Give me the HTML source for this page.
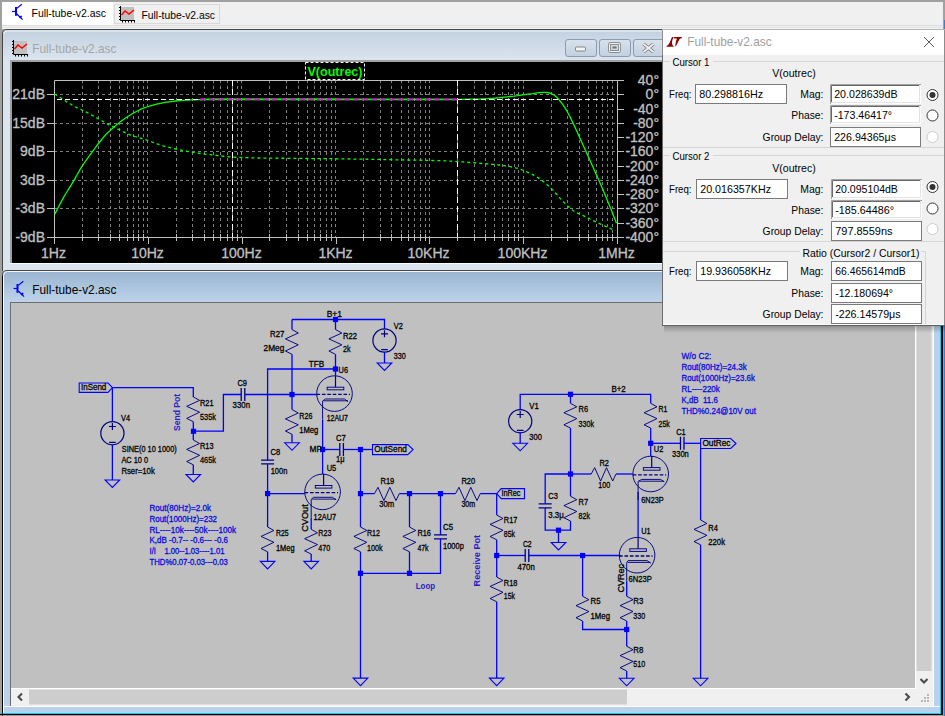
<!DOCTYPE html><html><head><meta charset="utf-8"><style>
html,body{margin:0;padding:0;width:945px;height:716px;overflow:hidden;background:#a0a0a0}
svg text{font-family:"Liberation Sans", sans-serif}
</style></head><body>
<svg width="945" height="716" viewBox="0 0 945 716" style="position:absolute;left:0;top:0;display:block">
<defs>
<linearGradient id="tbInact" x1="0" y1="0" x2="0" y2="1"><stop offset="0" stop-color="#c3d1df"/><stop offset="1" stop-color="#dbe5f0"/></linearGradient>
<linearGradient id="tbAct" x1="0" y1="0" x2="0" y2="1"><stop offset="0" stop-color="#9ab4d0"/><stop offset="1" stop-color="#bcd3ea"/></linearGradient>
<linearGradient id="btnG" x1="0" y1="0" x2="0" y2="1"><stop offset="0" stop-color="#d8e2ec"/><stop offset="1" stop-color="#c2d0de"/></linearGradient>
<linearGradient id="shadow" x1="0" y1="0" x2="0" y2="1"><stop offset="0" stop-color="#000" stop-opacity="0.25"/><stop offset="1" stop-color="#000" stop-opacity="0"/></linearGradient>
</defs>

<rect x="0" y="0" width="945" height="716" fill="#a0a0a0"/>
<rect x="2" y="2" width="943" height="27" fill="#f0f0f0"/>
<rect x="2" y="2" width="111" height="23" fill="#ffffff"/>
<rect x="2" y="25" width="943" height="1" fill="#dcdcdc"/>
<rect x="2" y="27" width="943" height="1" fill="#e2e2e2"/>
<rect x="114.5" y="4.5" width="105" height="19" fill="#f0f0f0" stroke="#d9d9d9" stroke-width="1"/>
<g fill="none" stroke="#0000ff"><line x1="12" y1="11.5" x2="15.5" y2="11.5" stroke-width="1.2"/><line x1="16" y1="7" x2="16" y2="15.8" stroke-width="2"/><line x1="16.8" y1="8.4" x2="21.8" y2="4.2" stroke-width="1.2"/><line x1="16.8" y1="14" x2="22.6" y2="19.6" stroke-width="1.2"/><line x1="19.4" y1="17.6" x2="21.8" y2="16.2" stroke-width="1.8"/></g>
<rect x="121" y="7" width="13" height="13" fill="#c0c0c0"/><path d="M120.5 6 V20.5 H135" fill="none" stroke="#000" stroke-width="1"/><rect x="119" y="7" width="2" height="1" fill="#000"/><rect x="122" y="21" width="1" height="1.5" fill="#000"/><rect x="119" y="10" width="2" height="1" fill="#000"/><rect x="125" y="21" width="1" height="1.5" fill="#000"/><rect x="119" y="13" width="2" height="1" fill="#000"/><rect x="128" y="21" width="1" height="1.5" fill="#000"/><rect x="119" y="16" width="2" height="1" fill="#000"/><rect x="131" y="21" width="1" height="1.5" fill="#000"/><rect x="119" y="19" width="2" height="1" fill="#000"/><rect x="134" y="21" width="1" height="1.5" fill="#000"/><path d="M121.5 15 L125 11 L129 14 L134 10" fill="none" stroke="#ff0000" stroke-width="1.5"/>
<text x="31.5" y="17" font-size="11.5" fill="#000" textLength="74.5" lengthAdjust="spacingAndGlyphs">Full-tube-v2.asc</text>
<text x="141.5" y="18.6" font-size="11.3" fill="#000" textLength="73.5" lengthAdjust="spacingAndGlyphs">Full-tube-v2.asc</text>
<rect x="2" y="26" width="943" height="1" fill="#f0f0f0"/>
<rect x="2" y="28" width="943" height="1" fill="#f4f4f4"/>
<path d="M2.5 271 V34 Q2.5 29.5 7 29.5 H945" fill="#dbe5f0" stroke="#444" stroke-width="1"/>
<path d="M3 61 V34.5 Q3 30 7.5 30 H945 V61 Z" fill="url(#tbInact)"/>
<path d="M4 33.5 Q4 31 7.5 31 H945" fill="none" stroke="#eef3f8" stroke-width="1"/>
<rect x="3" y="61" width="942" height="210" fill="#dbe5f0"/>
<rect x="14" y="41" width="13" height="13" fill="#c0c0c0"/><path d="M13.5 40 V54.5 H28" fill="none" stroke="#000" stroke-width="1"/><rect x="12" y="41" width="2" height="1" fill="#000"/><rect x="15" y="55" width="1" height="1.5" fill="#000"/><rect x="12" y="44" width="2" height="1" fill="#000"/><rect x="18" y="55" width="1" height="1.5" fill="#000"/><rect x="12" y="47" width="2" height="1" fill="#000"/><rect x="21" y="55" width="1" height="1.5" fill="#000"/><rect x="12" y="50" width="2" height="1" fill="#000"/><rect x="24" y="55" width="1" height="1.5" fill="#000"/><rect x="12" y="53" width="2" height="1" fill="#000"/><rect x="27" y="55" width="1" height="1.5" fill="#000"/><path d="M14.5 49 L18 45 L22 48 L27 44" fill="none" stroke="#ff0000" stroke-width="1.5"/>
<text x="32.3" y="53" font-size="12.2" fill="#a5a5a5" textLength="84" lengthAdjust="spacingAndGlyphs">Full-tube-v2.asc</text>
<rect x="565.5" y="39.5" width="31" height="17" rx="2.5" fill="url(#btnG)" stroke="#8c9bb0" stroke-width="1"/>
<rect x="575.5" y="47" width="10" height="4" rx="1" fill="#f4f4f4" stroke="#707070" stroke-width="0.8"/>
<rect x="599.5" y="39.5" width="31" height="17" rx="2.5" fill="url(#btnG)" stroke="#8c9bb0" stroke-width="1"/>
<rect x="609.5" y="43.5" width="10" height="8" rx="1" fill="none" stroke="#707070" stroke-width="2.6"/>
<rect x="609.5" y="43.5" width="10" height="8" rx="1" fill="none" stroke="#f4f4f4" stroke-width="1.2"/>
<rect x="612.5" y="46.5" width="4" height="2" fill="#707070"/>
<rect x="633.5" y="39.5" width="31" height="17" rx="2.5" fill="url(#btnG)" stroke="#8c9bb0" stroke-width="1"/>
<path d="M643.5 44 L653.5 52 M653.5 44 L643.5 52" stroke="#707070" stroke-width="3.4"/>
<path d="M643.5 44 L653.5 52 M653.5 44 L643.5 52" stroke="#f4f4f4" stroke-width="1.8"/>
<rect x="10" y="60" width="935" height="204" fill="#ffffff"/>
<rect x="10" y="60" width="935" height="203" fill="#a0a0a0"/>
<rect x="12" y="62" width="933" height="201" fill="#000000"/>
<line x1="54" y1="94.5" x2="617" y2="94.5" stroke="#808080" stroke-width="1" stroke-dasharray="3 3"/>
<line x1="54" y1="123.5" x2="617" y2="123.5" stroke="#808080" stroke-width="1" stroke-dasharray="3 3"/>
<line x1="54" y1="151.5" x2="617" y2="151.5" stroke="#808080" stroke-width="1" stroke-dasharray="3 3"/>
<line x1="54" y1="180.5" x2="617" y2="180.5" stroke="#808080" stroke-width="1" stroke-dasharray="3 3"/>
<line x1="54" y1="208.5" x2="617" y2="208.5" stroke="#808080" stroke-width="1" stroke-dasharray="3 3"/>
<line x1="82.5" y1="80" x2="82.5" y2="237" stroke="#808080" stroke-width="1" stroke-dasharray="3 3"/>
<line x1="98.5" y1="80" x2="98.5" y2="237" stroke="#808080" stroke-width="1" stroke-dasharray="3 3"/>
<line x1="110.5" y1="80" x2="110.5" y2="237" stroke="#808080" stroke-width="1" stroke-dasharray="3 3"/>
<line x1="119.5" y1="80" x2="119.5" y2="237" stroke="#808080" stroke-width="1" stroke-dasharray="3 3"/>
<line x1="127.5" y1="80" x2="127.5" y2="237" stroke="#808080" stroke-width="1" stroke-dasharray="3 3"/>
<line x1="133.5" y1="80" x2="133.5" y2="237" stroke="#808080" stroke-width="1" stroke-dasharray="3 3"/>
<line x1="138.5" y1="80" x2="138.5" y2="237" stroke="#808080" stroke-width="1" stroke-dasharray="3 3"/>
<line x1="143.5" y1="80" x2="143.5" y2="237" stroke="#808080" stroke-width="1" stroke-dasharray="3 3"/>
<line x1="147.5" y1="80" x2="147.5" y2="237" stroke="#808080" stroke-width="1" stroke-dasharray="3 3"/>
<line x1="176.5" y1="80" x2="176.5" y2="237" stroke="#808080" stroke-width="1" stroke-dasharray="3 3"/>
<line x1="192.5" y1="80" x2="192.5" y2="237" stroke="#808080" stroke-width="1" stroke-dasharray="3 3"/>
<line x1="204.5" y1="80" x2="204.5" y2="237" stroke="#808080" stroke-width="1" stroke-dasharray="3 3"/>
<line x1="213.5" y1="80" x2="213.5" y2="237" stroke="#808080" stroke-width="1" stroke-dasharray="3 3"/>
<line x1="220.5" y1="80" x2="220.5" y2="237" stroke="#808080" stroke-width="1" stroke-dasharray="3 3"/>
<line x1="227.5" y1="80" x2="227.5" y2="237" stroke="#808080" stroke-width="1" stroke-dasharray="3 3"/>
<line x1="232.5" y1="80" x2="232.5" y2="237" stroke="#808080" stroke-width="1" stroke-dasharray="3 3"/>
<line x1="237.5" y1="80" x2="237.5" y2="237" stroke="#808080" stroke-width="1" stroke-dasharray="3 3"/>
<line x1="241.5" y1="80" x2="241.5" y2="237" stroke="#808080" stroke-width="1" stroke-dasharray="3 3"/>
<line x1="269.5" y1="80" x2="269.5" y2="237" stroke="#808080" stroke-width="1" stroke-dasharray="3 3"/>
<line x1="286.5" y1="80" x2="286.5" y2="237" stroke="#808080" stroke-width="1" stroke-dasharray="3 3"/>
<line x1="298.5" y1="80" x2="298.5" y2="237" stroke="#808080" stroke-width="1" stroke-dasharray="3 3"/>
<line x1="307.5" y1="80" x2="307.5" y2="237" stroke="#808080" stroke-width="1" stroke-dasharray="3 3"/>
<line x1="314.5" y1="80" x2="314.5" y2="237" stroke="#808080" stroke-width="1" stroke-dasharray="3 3"/>
<line x1="320.5" y1="80" x2="320.5" y2="237" stroke="#808080" stroke-width="1" stroke-dasharray="3 3"/>
<line x1="326.5" y1="80" x2="326.5" y2="237" stroke="#808080" stroke-width="1" stroke-dasharray="3 3"/>
<line x1="331.5" y1="80" x2="331.5" y2="237" stroke="#808080" stroke-width="1" stroke-dasharray="3 3"/>
<line x1="335.5" y1="80" x2="335.5" y2="237" stroke="#808080" stroke-width="1" stroke-dasharray="3 3"/>
<line x1="363.5" y1="80" x2="363.5" y2="237" stroke="#808080" stroke-width="1" stroke-dasharray="3 3"/>
<line x1="380.5" y1="80" x2="380.5" y2="237" stroke="#808080" stroke-width="1" stroke-dasharray="3 3"/>
<line x1="391.5" y1="80" x2="391.5" y2="237" stroke="#808080" stroke-width="1" stroke-dasharray="3 3"/>
<line x1="401.5" y1="80" x2="401.5" y2="237" stroke="#808080" stroke-width="1" stroke-dasharray="3 3"/>
<line x1="408.5" y1="80" x2="408.5" y2="237" stroke="#808080" stroke-width="1" stroke-dasharray="3 3"/>
<line x1="414.5" y1="80" x2="414.5" y2="237" stroke="#808080" stroke-width="1" stroke-dasharray="3 3"/>
<line x1="420.5" y1="80" x2="420.5" y2="237" stroke="#808080" stroke-width="1" stroke-dasharray="3 3"/>
<line x1="425.5" y1="80" x2="425.5" y2="237" stroke="#808080" stroke-width="1" stroke-dasharray="3 3"/>
<line x1="429.5" y1="80" x2="429.5" y2="237" stroke="#808080" stroke-width="1" stroke-dasharray="3 3"/>
<line x1="457.5" y1="80" x2="457.5" y2="237" stroke="#808080" stroke-width="1" stroke-dasharray="3 3"/>
<line x1="474.5" y1="80" x2="474.5" y2="237" stroke="#808080" stroke-width="1" stroke-dasharray="3 3"/>
<line x1="485.5" y1="80" x2="485.5" y2="237" stroke="#808080" stroke-width="1" stroke-dasharray="3 3"/>
<line x1="494.5" y1="80" x2="494.5" y2="237" stroke="#808080" stroke-width="1" stroke-dasharray="3 3"/>
<line x1="502.5" y1="80" x2="502.5" y2="237" stroke="#808080" stroke-width="1" stroke-dasharray="3 3"/>
<line x1="508.5" y1="80" x2="508.5" y2="237" stroke="#808080" stroke-width="1" stroke-dasharray="3 3"/>
<line x1="514.5" y1="80" x2="514.5" y2="237" stroke="#808080" stroke-width="1" stroke-dasharray="3 3"/>
<line x1="518.5" y1="80" x2="518.5" y2="237" stroke="#808080" stroke-width="1" stroke-dasharray="3 3"/>
<line x1="523.5" y1="80" x2="523.5" y2="237" stroke="#808080" stroke-width="1" stroke-dasharray="3 3"/>
<line x1="551.5" y1="80" x2="551.5" y2="237" stroke="#808080" stroke-width="1" stroke-dasharray="3 3"/>
<line x1="567.5" y1="80" x2="567.5" y2="237" stroke="#808080" stroke-width="1" stroke-dasharray="3 3"/>
<line x1="579.5" y1="80" x2="579.5" y2="237" stroke="#808080" stroke-width="1" stroke-dasharray="3 3"/>
<line x1="588.5" y1="80" x2="588.5" y2="237" stroke="#808080" stroke-width="1" stroke-dasharray="3 3"/>
<line x1="596.5" y1="80" x2="596.5" y2="237" stroke="#808080" stroke-width="1" stroke-dasharray="3 3"/>
<line x1="602.5" y1="80" x2="602.5" y2="237" stroke="#808080" stroke-width="1" stroke-dasharray="3 3"/>
<line x1="607.5" y1="80" x2="607.5" y2="237" stroke="#808080" stroke-width="1" stroke-dasharray="3 3"/>
<line x1="612.5" y1="80" x2="612.5" y2="237" stroke="#808080" stroke-width="1" stroke-dasharray="3 3"/>
<path d="M54.5 237.5 V80.5 H617.5 V237.5 Z" fill="none" stroke="#c0c0c0" stroke-width="1"/>
<line x1="617" y1="80.5" x2="624" y2="80.5" stroke="#c0c0c0"/>
<line x1="617" y1="237.5" x2="624" y2="237.5" stroke="#c0c0c0"/>
<line x1="47" y1="94.5" x2="54" y2="94.5" stroke="#c0c0c0"/>
<text x="45" y="99.3" font-size="14" fill="#c0c0c0" stroke="#c0c0c0" stroke-width="0.3" text-anchor="end">21dB</text>
<line x1="47" y1="123.5" x2="54" y2="123.5" stroke="#c0c0c0"/>
<text x="45" y="128.3" font-size="14" fill="#c0c0c0" stroke="#c0c0c0" stroke-width="0.3" text-anchor="end">15dB</text>
<line x1="47" y1="151.5" x2="54" y2="151.5" stroke="#c0c0c0"/>
<text x="45" y="156.3" font-size="14" fill="#c0c0c0" stroke="#c0c0c0" stroke-width="0.3" text-anchor="end">9dB</text>
<line x1="47" y1="180.5" x2="54" y2="180.5" stroke="#c0c0c0"/>
<text x="45" y="185.3" font-size="14" fill="#c0c0c0" stroke="#c0c0c0" stroke-width="0.3" text-anchor="end">3dB</text>
<line x1="47" y1="208.5" x2="54" y2="208.5" stroke="#c0c0c0"/>
<text x="45" y="213.3" font-size="14" fill="#c0c0c0" stroke="#c0c0c0" stroke-width="0.3" text-anchor="end">-3dB</text>
<line x1="47" y1="237.5" x2="54" y2="237.5" stroke="#c0c0c0"/>
<text x="45" y="242.3" font-size="14" fill="#c0c0c0" stroke="#c0c0c0" stroke-width="0.3" text-anchor="end">-9dB</text>
<line x1="617" y1="80.5" x2="624" y2="80.5" stroke="#c0c0c0"/>
<text x="659" y="85.3" font-size="14" fill="#c0c0c0" stroke="#c0c0c0" stroke-width="0.3" text-anchor="end">40°</text>
<line x1="617" y1="94.5" x2="624" y2="94.5" stroke="#c0c0c0"/>
<text x="659" y="99.3" font-size="14" fill="#c0c0c0" stroke="#c0c0c0" stroke-width="0.3" text-anchor="end">0°</text>
<line x1="617" y1="109.5" x2="624" y2="109.5" stroke="#c0c0c0"/>
<text x="659" y="114.3" font-size="14" fill="#c0c0c0" stroke="#c0c0c0" stroke-width="0.3" text-anchor="end">-40°</text>
<line x1="617" y1="123.5" x2="624" y2="123.5" stroke="#c0c0c0"/>
<text x="659" y="128.3" font-size="14" fill="#c0c0c0" stroke="#c0c0c0" stroke-width="0.3" text-anchor="end">-80°</text>
<line x1="617" y1="137.5" x2="624" y2="137.5" stroke="#c0c0c0"/>
<text x="659" y="142.3" font-size="14" fill="#c0c0c0" stroke="#c0c0c0" stroke-width="0.3" text-anchor="end">-120°</text>
<line x1="617" y1="151.5" x2="624" y2="151.5" stroke="#c0c0c0"/>
<text x="659" y="156.3" font-size="14" fill="#c0c0c0" stroke="#c0c0c0" stroke-width="0.3" text-anchor="end">-160°</text>
<line x1="617" y1="166.5" x2="624" y2="166.5" stroke="#c0c0c0"/>
<text x="659" y="171.3" font-size="14" fill="#c0c0c0" stroke="#c0c0c0" stroke-width="0.3" text-anchor="end">-200°</text>
<line x1="617" y1="180.5" x2="624" y2="180.5" stroke="#c0c0c0"/>
<text x="659" y="185.3" font-size="14" fill="#c0c0c0" stroke="#c0c0c0" stroke-width="0.3" text-anchor="end">-240°</text>
<line x1="617" y1="194.5" x2="624" y2="194.5" stroke="#c0c0c0"/>
<text x="659" y="199.3" font-size="14" fill="#c0c0c0" stroke="#c0c0c0" stroke-width="0.3" text-anchor="end">-280°</text>
<line x1="617" y1="208.5" x2="624" y2="208.5" stroke="#c0c0c0"/>
<text x="659" y="213.3" font-size="14" fill="#c0c0c0" stroke="#c0c0c0" stroke-width="0.3" text-anchor="end">-320°</text>
<line x1="617" y1="223.5" x2="624" y2="223.5" stroke="#c0c0c0"/>
<text x="659" y="228.3" font-size="14" fill="#c0c0c0" stroke="#c0c0c0" stroke-width="0.3" text-anchor="end">-360°</text>
<line x1="617" y1="237.5" x2="624" y2="237.5" stroke="#c0c0c0"/>
<text x="659" y="242.3" font-size="14" fill="#c0c0c0" stroke="#c0c0c0" stroke-width="0.3" text-anchor="end">-400°</text>
<line x1="54.5" y1="237" x2="54.5" y2="244" stroke="#c0c0c0"/>
<text x="53.5" y="257.8" font-size="14" fill="#c0c0c0" stroke="#c0c0c0" stroke-width="0.3" text-anchor="middle">1Hz</text>
<line x1="82.5" y1="234" x2="82.5" y2="241" stroke="#c0c0c0"/>
<line x1="98.5" y1="234" x2="98.5" y2="241" stroke="#c0c0c0"/>
<line x1="110.5" y1="234" x2="110.5" y2="241" stroke="#c0c0c0"/>
<line x1="119.5" y1="234" x2="119.5" y2="241" stroke="#c0c0c0"/>
<line x1="127.5" y1="234" x2="127.5" y2="241" stroke="#c0c0c0"/>
<line x1="133.5" y1="234" x2="133.5" y2="241" stroke="#c0c0c0"/>
<line x1="138.5" y1="234" x2="138.5" y2="241" stroke="#c0c0c0"/>
<line x1="143.5" y1="234" x2="143.5" y2="241" stroke="#c0c0c0"/>
<line x1="148.5" y1="237" x2="148.5" y2="244" stroke="#c0c0c0"/>
<text x="147.5" y="257.8" font-size="14" fill="#c0c0c0" stroke="#c0c0c0" stroke-width="0.3" text-anchor="middle">10Hz</text>
<line x1="176.5" y1="234" x2="176.5" y2="241" stroke="#c0c0c0"/>
<line x1="192.5" y1="234" x2="192.5" y2="241" stroke="#c0c0c0"/>
<line x1="204.5" y1="234" x2="204.5" y2="241" stroke="#c0c0c0"/>
<line x1="213.5" y1="234" x2="213.5" y2="241" stroke="#c0c0c0"/>
<line x1="220.5" y1="234" x2="220.5" y2="241" stroke="#c0c0c0"/>
<line x1="227.5" y1="234" x2="227.5" y2="241" stroke="#c0c0c0"/>
<line x1="232.5" y1="234" x2="232.5" y2="241" stroke="#c0c0c0"/>
<line x1="237.5" y1="234" x2="237.5" y2="241" stroke="#c0c0c0"/>
<line x1="242.5" y1="237" x2="242.5" y2="244" stroke="#c0c0c0"/>
<text x="241.5" y="257.8" font-size="14" fill="#c0c0c0" stroke="#c0c0c0" stroke-width="0.3" text-anchor="middle">100Hz</text>
<line x1="269.5" y1="234" x2="269.5" y2="241" stroke="#c0c0c0"/>
<line x1="286.5" y1="234" x2="286.5" y2="241" stroke="#c0c0c0"/>
<line x1="298.5" y1="234" x2="298.5" y2="241" stroke="#c0c0c0"/>
<line x1="307.5" y1="234" x2="307.5" y2="241" stroke="#c0c0c0"/>
<line x1="314.5" y1="234" x2="314.5" y2="241" stroke="#c0c0c0"/>
<line x1="320.5" y1="234" x2="320.5" y2="241" stroke="#c0c0c0"/>
<line x1="326.5" y1="234" x2="326.5" y2="241" stroke="#c0c0c0"/>
<line x1="331.5" y1="234" x2="331.5" y2="241" stroke="#c0c0c0"/>
<line x1="336.5" y1="237" x2="336.5" y2="244" stroke="#c0c0c0"/>
<text x="335.5" y="257.8" font-size="14" fill="#c0c0c0" stroke="#c0c0c0" stroke-width="0.3" text-anchor="middle">1KHz</text>
<line x1="363.5" y1="234" x2="363.5" y2="241" stroke="#c0c0c0"/>
<line x1="380.5" y1="234" x2="380.5" y2="241" stroke="#c0c0c0"/>
<line x1="391.5" y1="234" x2="391.5" y2="241" stroke="#c0c0c0"/>
<line x1="401.5" y1="234" x2="401.5" y2="241" stroke="#c0c0c0"/>
<line x1="408.5" y1="234" x2="408.5" y2="241" stroke="#c0c0c0"/>
<line x1="414.5" y1="234" x2="414.5" y2="241" stroke="#c0c0c0"/>
<line x1="420.5" y1="234" x2="420.5" y2="241" stroke="#c0c0c0"/>
<line x1="425.5" y1="234" x2="425.5" y2="241" stroke="#c0c0c0"/>
<line x1="429.5" y1="237" x2="429.5" y2="244" stroke="#c0c0c0"/>
<text x="428.5" y="257.8" font-size="14" fill="#c0c0c0" stroke="#c0c0c0" stroke-width="0.3" text-anchor="middle">10KHz</text>
<line x1="457.5" y1="234" x2="457.5" y2="241" stroke="#c0c0c0"/>
<line x1="474.5" y1="234" x2="474.5" y2="241" stroke="#c0c0c0"/>
<line x1="485.5" y1="234" x2="485.5" y2="241" stroke="#c0c0c0"/>
<line x1="494.5" y1="234" x2="494.5" y2="241" stroke="#c0c0c0"/>
<line x1="502.5" y1="234" x2="502.5" y2="241" stroke="#c0c0c0"/>
<line x1="508.5" y1="234" x2="508.5" y2="241" stroke="#c0c0c0"/>
<line x1="514.5" y1="234" x2="514.5" y2="241" stroke="#c0c0c0"/>
<line x1="518.5" y1="234" x2="518.5" y2="241" stroke="#c0c0c0"/>
<line x1="523.5" y1="237" x2="523.5" y2="244" stroke="#c0c0c0"/>
<text x="522.5" y="257.8" font-size="14" fill="#c0c0c0" stroke="#c0c0c0" stroke-width="0.3" text-anchor="middle">100KHz</text>
<line x1="551.5" y1="234" x2="551.5" y2="241" stroke="#c0c0c0"/>
<line x1="567.5" y1="234" x2="567.5" y2="241" stroke="#c0c0c0"/>
<line x1="579.5" y1="234" x2="579.5" y2="241" stroke="#c0c0c0"/>
<line x1="588.5" y1="234" x2="588.5" y2="241" stroke="#c0c0c0"/>
<line x1="596.5" y1="234" x2="596.5" y2="241" stroke="#c0c0c0"/>
<line x1="602.5" y1="234" x2="602.5" y2="241" stroke="#c0c0c0"/>
<line x1="607.5" y1="234" x2="607.5" y2="241" stroke="#c0c0c0"/>
<line x1="612.5" y1="234" x2="612.5" y2="241" stroke="#c0c0c0"/>
<line x1="617.5" y1="237" x2="617.5" y2="244" stroke="#c0c0c0"/>
<text x="616.5" y="257.8" font-size="14" fill="#c0c0c0" stroke="#c0c0c0" stroke-width="0.3" text-anchor="middle">1MHz</text>
<line x1="232.5" y1="80" x2="232.5" y2="237" stroke="#ffffff" stroke-width="1" stroke-dasharray="6 3"/>
<line x1="457.5" y1="80" x2="457.5" y2="237" stroke="#ffffff" stroke-width="1" stroke-dasharray="6 3"/>
<polyline points="54.6,94.0 56.7,95.3 59.6,97.2 63.0,99.4 66.6,101.7 70.0,103.8 72.9,105.5 75.2,106.8 77.2,107.8 79.1,108.7 80.8,109.5 82.6,110.3 84.4,111.2 86.3,112.2 88.2,113.2 90.1,114.3 92.0,115.3 93.9,116.3 95.8,117.4 97.7,118.5 99.6,119.5 101.5,120.6 103.5,121.7 105.4,122.8 107.3,123.8 109.2,124.8 111.1,125.8 113.0,126.7 114.9,127.7 116.8,128.6 118.7,129.5 120.6,130.4 122.4,131.3 124.2,132.2 126.0,133.1 128.0,133.9 130.2,134.8 132.6,135.6 135.1,136.5 137.8,137.3 140.5,138.1 143.3,139.0 146.2,139.9 149.1,140.9 152.0,142.0 154.9,143.1 158.0,144.2 161.2,145.3 164.5,146.3 168.1,147.2 171.8,148.1 175.7,149.0 179.7,149.8 183.6,150.6 187.5,151.3 191.2,152.0 194.6,152.6 198.1,153.1 201.8,153.7 205.8,154.2 210.4,154.7 215.1,155.2 219.5,155.8 224.3,156.3 230.1,156.9 237.5,157.3 247.0,157.7 259.2,158.0 273.8,158.2 290.0,158.3 307.0,158.5 323.9,158.6 340.0,158.8 356.2,159.1 373.3,159.3 390.4,159.7 406.5,160.0 420.8,160.2 432.3,160.5 440.3,160.7 445.5,160.9 448.8,161.0 451.2,161.2 453.8,161.4 457.5,161.6 462.4,161.9 467.7,162.3 473.1,162.7 478.4,163.2 483.2,163.6 487.3,163.9 490.5,164.2 493.1,164.4 495.3,164.6 497.2,164.8 499.0,165.0 501.0,165.2 503.1,165.5 505.1,165.8 507.1,166.1 509.1,166.4 510.9,166.8 512.6,167.1 514.1,167.4 515.5,167.8 516.8,168.1 518.1,168.4 519.4,168.9 520.9,169.4 522.5,170.0 524.2,170.7 526.0,171.5 527.8,172.3 529.6,173.1 531.4,174.0 533.1,174.9 534.9,175.9 536.6,176.8 538.4,177.9 540.1,179.1 541.9,180.3 543.7,181.7 545.4,183.1 547.2,184.7 548.9,186.3 550.7,188.0 552.4,189.7 554.1,191.5 555.9,193.5 557.6,195.4 559.3,197.4 561.1,199.4 562.8,201.2 564.5,202.9 566.3,204.7 568.0,206.3 569.8,207.9 571.5,209.4 573.3,210.7 575.1,211.8 576.8,212.8 578.6,213.6 580.3,214.3 582.1,215.1 583.8,215.9 585.5,216.8 587.3,217.6 589.0,218.5 590.7,219.4 592.5,220.3 594.2,221.1 595.9,221.9 597.7,222.8 599.4,223.6 601.2,224.4 602.9,225.2 604.7,226.0 606.6,226.8 608.6,227.7 610.6,228.6 612.5,229.4 614.1,230.1 615.2,230.6" fill="none" stroke="#00ff00" stroke-width="1.3" stroke-dasharray="3 3"/>
<polyline points="54.6,214.5 55.6,212.6 57.0,209.9 58.6,206.7 60.3,203.4 62.1,200.1 63.7,197.1 65.2,194.5 66.8,192.0 68.3,189.6 69.8,187.2 71.4,184.7 72.9,182.2 74.4,179.6 75.9,176.9 77.4,174.3 78.9,171.6 80.4,168.9 82.1,166.2 83.9,163.5 85.7,160.8 87.7,158.1 89.6,155.4 91.6,152.8 93.5,150.2 95.4,147.6 97.3,145.0 99.2,142.5 101.2,140.0 103.1,137.7 105.0,135.5 106.9,133.5 108.8,131.6 110.7,129.9 112.6,128.2 114.5,126.6 116.4,125.0 118.3,123.5 120.1,122.0 122.0,120.6 123.9,119.2 125.9,117.8 127.9,116.5 130.0,115.2 132.2,113.8 134.5,112.5 136.8,111.2 139.2,110.0 141.6,108.9 144.1,107.9 146.7,107.0 149.4,106.1 152.1,105.3 154.9,104.6 157.7,103.9 160.6,103.3 163.5,102.7 166.4,102.2 169.5,101.8 172.7,101.4 176.0,101.0 179.5,100.7 183.0,100.4 186.7,100.1 190.5,99.9 194.6,99.8 198.9,99.6 201.7,99.5 202.4,99.4 203.4,99.3 206.8,99.3 214.9,99.2 230.0,99.2 255.5,99.2 290.3,99.2 329.8,99.2 369.3,99.3 404.3,99.3 430.0,99.3 445.4,99.3 454.2,99.3 458.3,99.3 459.9,99.3 461.2,99.3 464.4,99.3 469.0,99.2 473.3,99.2 477.2,99.1 480.8,99.0 484.2,98.8 487.3,98.7 490.0,98.5 492.4,98.4 494.4,98.2 496.3,98.0 498.1,97.8 500.0,97.6 501.9,97.4 503.7,97.2 505.4,97.1 507.1,96.9 508.8,96.7 510.5,96.5 512.2,96.3 514.0,96.1 515.7,95.8 517.4,95.6 519.2,95.3 520.9,95.1 522.7,94.9 524.5,94.7 526.3,94.4 528.1,94.2 529.8,94.0 531.4,93.8 532.9,93.6 534.4,93.3 535.7,93.1 537.1,92.9 538.4,92.7 539.8,92.6 541.2,92.5 542.7,92.4 544.1,92.4 545.6,92.4 546.9,92.5 548.2,92.7 549.4,93.0 550.5,93.3 551.5,93.7 552.5,94.2 553.5,94.8 554.5,95.5 555.5,96.3 556.6,97.2 557.6,98.2 558.6,99.3 559.7,100.5 560.7,101.8 561.7,103.2 562.8,104.6 563.8,106.1 564.9,107.7 565.9,109.4 567.0,111.2 568.0,113.0 568.9,114.7 569.9,116.6 570.9,118.6 572.0,121.0 573.3,123.7 574.8,126.9 576.5,130.6 578.3,134.6 580.2,138.7 582.0,142.8 583.8,146.8 585.5,150.6 587.3,154.4 589.0,158.2 590.7,162.1 592.5,165.9 594.2,169.8 595.9,173.7 597.6,177.6 599.4,181.5 601.1,185.4 602.9,189.6 604.7,193.9 606.7,198.8 609.0,204.4 611.3,210.1 613.4,215.4 615.2,220.0 616.5,223.2" fill="none" stroke="#00ff00" stroke-width="1.3"/>
<line x1="57" y1="99.5" x2="617" y2="99.5" stroke="#ffffff" stroke-width="1.1" stroke-dasharray="5 3"/>
<line x1="200" y1="99.5" x2="457.5" y2="99.5" stroke="#00ff00" stroke-width="1.4"/>
<line x1="200" y1="99.5" x2="457.5" y2="99.5" stroke="#ff00ff" stroke-width="1.4" stroke-dasharray="6 3"/>
<rect x="305.5" y="62.5" width="59" height="17" fill="#000" stroke="#ffffff" stroke-width="1" stroke-dasharray="3 2"/>
<text x="307.5" y="75.5" font-size="13.6" font-weight="bold" fill="#00ff00" textLength="55" lengthAdjust="spacingAndGlyphs">V(outrec)</text>
<path d="M2.5 716 V275 Q2.5 270.5 7 270.5 H945" fill="#b9d1ea" stroke="#444" stroke-width="1"/>
<path d="M3 302 V275.5 Q3 271 7.5 271 H945 V302 Z" fill="url(#tbAct)"/>
<path d="M3.5 275.5 Q3.5 271.5 7.5 271.5 H945" fill="none" stroke="#f2f6fa" stroke-width="1"/>
<rect x="3" y="302" width="937" height="411" fill="#b9d1ea"/>
<g fill="none" stroke="#0000ff"><line x1="13.5" y1="288.5" x2="17.0" y2="288.5" stroke-width="1.2"/><line x1="17.5" y1="284" x2="17.5" y2="292.8" stroke-width="2"/><line x1="18.3" y1="285.4" x2="23.3" y2="281.2" stroke-width="1.2"/><line x1="18.3" y1="291" x2="24.1" y2="296.6" stroke-width="1.2"/><line x1="20.9" y1="294.6" x2="23.3" y2="293.2" stroke-width="1.8"/></g>
<text x="32.3" y="294" font-size="12.2" fill="#000" textLength="84" lengthAdjust="spacingAndGlyphs">Full-tube-v2.asc</text>
<rect x="10" y="302" width="924" height="405" fill="#ffffff"/>
<rect x="10" y="302" width="923" height="404" fill="#6d6d6d"/>
<rect x="11" y="303" width="922" height="403" fill="#f0f0f0"/>
<rect x="11" y="303" width="904" height="385" fill="#c0c0c0"/>
<rect x="11" y="688" width="905" height="1" fill="#ffffff"/>
<rect x="915" y="303" width="1" height="386" fill="#ffffff"/>
<rect x="29" y="689.5" width="598" height="15" fill="#cdcdcd"/>
<path d="M22 693.5 L18.5 697 L22 700.5" fill="none" stroke="#4a4a4a" stroke-width="2.1"/>
<path d="M905.5 693.5 L909 697 L905.5 700.5" fill="none" stroke="#4a4a4a" stroke-width="2.1"/>
<rect x="916.5" y="303" width="15" height="368" fill="#cdcdcd"/>
<path d="M920.5 679 L924 682.5 L927.5 679" fill="none" stroke="#4a4a4a" stroke-width="2.1"/>
<rect x="927" y="694" width="2" height="2" fill="#b8b8b8"/>
<rect x="924" y="697" width="2" height="2" fill="#b8b8b8"/>
<rect x="927" y="697" width="2" height="2" fill="#b8b8b8"/>
<rect x="921" y="700" width="2" height="2" fill="#b8b8b8"/>
<rect x="924" y="700" width="2" height="2" fill="#b8b8b8"/>
<rect x="927" y="700" width="2" height="2" fill="#b8b8b8"/>
<rect x="3" y="706" width="937" height="1" fill="#ffffff"/>
<rect x="0" y="713" width="942" height="1" fill="#1cc8ee"/>
<rect x="0" y="714" width="943" height="1" fill="#000"/>
<rect x="940" y="271" width="1" height="443" fill="#1cc8ee"/>
<rect x="941" y="271" width="2" height="444" fill="#000"/>
<rect x="943" y="0" width="2" height="716" fill="#a0a0a0"/>
<rect x="944" y="20" width="1" height="696" fill="#3c7fc8"/>
<rect x="3" y="276" width="1" height="437" fill="#ffffff"/>
<rect x="2" y="276" width="1" height="439" fill="#000"/>
<g><path d="M79.2,383 H108 L112.5,387.6 L108,392.4 H79.2 Z" fill="none" stroke="#0000ff" stroke-width="1.1"/>
<text x="81" y="390.2" font-size="8.2" fill="#000000" stroke="#000000" stroke-width="0.28" textLength="25.3" lengthAdjust="spacingAndGlyphs">InSend</text>
<path d="M112.5,387.6 L193.3,387.6 L193.3,396.9" fill="none" stroke="#0000ff" stroke-width="1.3"/>
<path d="M112.4,387.6 L112.4,421.5" fill="none" stroke="#0000ff" stroke-width="1.3"/>
<circle cx="112.4" cy="433.2" r="11.6" fill="none" stroke="#000080" stroke-width="1.2"/>
<path d="M108.9,426.5 H115.9 M112.4,423.0 V430.0 M109.10000000000001,442.4 H115.7" stroke="#000080" stroke-width="1.2"/>
<path d="M112.4,444.8 L112.4,480" fill="none" stroke="#0000ff" stroke-width="1.3"/>
<path d="M105.10000000000001,480 H119.7 L112.4,487.5 Z" fill="none" stroke="#0000ff" stroke-width="1.1"/>
<text x="121" y="421" font-size="8.2" fill="#000000" stroke="#000000" stroke-width="0.28" textLength="9" lengthAdjust="spacingAndGlyphs">V4</text>
<text x="121.8" y="451.9" font-size="8.2" fill="#000000" stroke="#000000" stroke-width="0.28" textLength="54.9" lengthAdjust="spacingAndGlyphs">SINE(0 10 1000)</text>
<text x="121.4" y="463" font-size="8.2" fill="#000000" stroke="#000000" stroke-width="0.28" textLength="26.7" lengthAdjust="spacingAndGlyphs">AC 10 0</text>
<text x="121.4" y="473.8" font-size="8.2" fill="#000000" stroke="#000000" stroke-width="0.28" textLength="33.4" lengthAdjust="spacingAndGlyphs">Rser=10k</text>
<path d="M193.3,396.9 L199.6,400.4 L186.7,406.3 L199.6,412.2 L186.7,418.4 L193.3,421.7" fill="none" stroke="#000080" stroke-width="0.95"/>
<path d="M193.3,421.7 L193.3,440" fill="none" stroke="#0000ff" stroke-width="1.3"/>
<rect x="190.9" y="428.7" width="5.2" height="5.2" fill="#0000ff"/>
<path d="M193.3,440.0 L199.6,443.5 L186.7,449.4 L199.6,455.3 L186.7,461.5 L193.3,464.8" fill="none" stroke="#000080" stroke-width="0.95"/>
<path d="M193.3,464.8 L193.3,474.5" fill="none" stroke="#0000ff" stroke-width="1.3"/>
<path d="M186.0,474.5 H200.60000000000002 L193.3,482.0 Z" fill="none" stroke="#0000ff" stroke-width="1.1"/>
<text x="200" y="406.3" font-size="8.2" fill="#000000" stroke="#000000" stroke-width="0.28" textLength="13.6" lengthAdjust="spacingAndGlyphs">R21</text>
<text x="200" y="420.2" font-size="8.2" fill="#000000" stroke="#000000" stroke-width="0.28" textLength="16" lengthAdjust="spacingAndGlyphs">535k</text>
<text x="200" y="448.6" font-size="8.2" fill="#000000" stroke="#000000" stroke-width="0.28" textLength="13.6" lengthAdjust="spacingAndGlyphs">R13</text>
<text x="200" y="462.7" font-size="8.2" fill="#000000" stroke="#000000" stroke-width="0.28" textLength="16" lengthAdjust="spacingAndGlyphs">465k</text>
<text x="180" y="431" font-size="8.8" font-weight="bold" fill="#2a1ec8" textLength="37" lengthAdjust="spacingAndGlyphs" transform="rotate(-90 180 431)">Send Pot</text>
<path d="M193.3,431.2 L223.4,431.2 L223.4,394.5 L241,394.5" fill="none" stroke="#0000ff" stroke-width="1.3"/>
<path d="M241.2,388.0 V401.0 M244.8,388.0 V401.0" stroke="#000080" stroke-width="1.3"/>
<path d="M244.8,394.5 L316.5,394.5" fill="none" stroke="#0000ff" stroke-width="1.3"/>
<rect x="289.4" y="391.9" width="5.2" height="5.2" fill="#0000ff"/>
<text x="237.4" y="385.5" font-size="8.2" fill="#000000" stroke="#000000" stroke-width="0.28" textLength="9.6" lengthAdjust="spacingAndGlyphs">C9</text>
<text x="232.6" y="408" font-size="8.2" fill="#000000" stroke="#000000" stroke-width="0.28" textLength="17.4" lengthAdjust="spacingAndGlyphs">330n</text>
<path d="M292,319.5 L292,329.5" fill="none" stroke="#0000ff" stroke-width="1.3"/>
<path d="M292.0,329.5 L298.3,333.0 L285.4,338.9 L298.3,344.8 L285.4,351.0 L292.0,354.3" fill="none" stroke="#000080" stroke-width="0.95"/>
<path d="M292,354.3 L292,409.5" fill="none" stroke="#0000ff" stroke-width="1.3"/>
<path d="M292.0,409.5 L298.3,413.0 L285.4,418.9 L298.3,424.8 L285.4,431.0 L292.0,434.3" fill="none" stroke="#000080" stroke-width="0.95"/>
<path d="M292,434.3 L292,442.8" fill="none" stroke="#0000ff" stroke-width="1.3"/>
<path d="M284.7,442.8 H299.3 L292,450.3 Z" fill="none" stroke="#0000ff" stroke-width="1.1"/>
<text x="270" y="336.7" font-size="8.2" fill="#000000" stroke="#000000" stroke-width="0.28" textLength="14.3" lengthAdjust="spacingAndGlyphs">R27</text>
<text x="263.6" y="351" font-size="8.2" fill="#000000" stroke="#000000" stroke-width="0.28" textLength="20.7" lengthAdjust="spacingAndGlyphs">2Meg</text>
<text x="299.3" y="418.8" font-size="8.2" fill="#000000" stroke="#000000" stroke-width="0.28" textLength="13.1" lengthAdjust="spacingAndGlyphs">R26</text>
<text x="299.3" y="433" font-size="8.2" fill="#000000" stroke="#000000" stroke-width="0.28" textLength="19.0" lengthAdjust="spacingAndGlyphs">1Meg</text>
<path d="M292,319.5 L384.5,319.5 L384.5,328.8" fill="none" stroke="#0000ff" stroke-width="1.3"/>
<rect x="332.9" y="316.9" width="5.2" height="5.2" fill="#0000ff"/>
<text x="326.7" y="317" font-size="8.2" fill="#000000" stroke="#000000" stroke-width="0.28" textLength="15.3" lengthAdjust="spacingAndGlyphs">B+1</text>
<path d="M335.5,319.5 L335.5,329.5" fill="none" stroke="#0000ff" stroke-width="1.3"/>
<path d="M335.5,329.5 L341.8,333.0 L328.9,338.9 L341.8,344.8 L328.9,351.0 L335.5,354.3" fill="none" stroke="#000080" stroke-width="0.95"/>
<path d="M335.5,354.3 L335.5,375.5" fill="none" stroke="#0000ff" stroke-width="1.3"/>
<rect x="332.9" y="366.4" width="5.2" height="5.2" fill="#0000ff"/>
<text x="343" y="338.6" font-size="8.2" fill="#000000" stroke="#000000" stroke-width="0.28" textLength="14" lengthAdjust="spacingAndGlyphs">R22</text>
<text x="343" y="352.4" font-size="8.2" fill="#000000" stroke="#000000" stroke-width="0.28" textLength="7.5" lengthAdjust="spacingAndGlyphs">2k</text>
<text x="338.6" y="372.6" font-size="8.2" fill="#000000" stroke="#000000" stroke-width="0.28" textLength="9.4" lengthAdjust="spacingAndGlyphs">U6</text>
<circle cx="384.5" cy="340.5" r="11.6" fill="none" stroke="#000080" stroke-width="1.2"/>
<path d="M381.0,333.8 H388.0 M384.5,330.3 V337.3 M381.2,349.7 H387.8" stroke="#000080" stroke-width="1.2"/>
<path d="M384.5,352.1 L384.5,363" fill="none" stroke="#0000ff" stroke-width="1.3"/>
<path d="M377.2,363 H391.8 L384.5,370.5 Z" fill="none" stroke="#0000ff" stroke-width="1.1"/>
<text x="393.8" y="329" font-size="8.2" fill="#000000" stroke="#000000" stroke-width="0.28" textLength="9.1" lengthAdjust="spacingAndGlyphs">V2</text>
<text x="393.8" y="359" font-size="8.2" fill="#000000" stroke="#000000" stroke-width="0.28" textLength="11.9" lengthAdjust="spacingAndGlyphs">330</text>
<path d="M335.5,369 L267.6,369 L267.6,460.2" fill="none" stroke="#0000ff" stroke-width="1.3"/>
<text x="308.8" y="367" font-size="8.2" fill="#000000" stroke="#000000" stroke-width="0.28" textLength="15.5" lengthAdjust="spacingAndGlyphs">TFB</text>
<path d="M261.1,460.2 H274.1 M261.1,463.9 H274.1" stroke="#000080" stroke-width="1.3"/>
<text x="270.5" y="454.8" font-size="8.2" fill="#000000" stroke="#000000" stroke-width="0.28" textLength="9.7" lengthAdjust="spacingAndGlyphs">C8</text>
<text x="270.7" y="474.3" font-size="8.2" fill="#000000" stroke="#000000" stroke-width="0.28" textLength="16.7" lengthAdjust="spacingAndGlyphs">100n</text>
<path d="M267.6,463.9 L267.6,527" fill="none" stroke="#0000ff" stroke-width="1.3"/>
<rect x="265.0" y="491.0" width="5.2" height="5.2" fill="#0000ff"/>
<path d="M267.6,527.0 L273.9,530.5 L261.0,536.4 L273.9,542.3 L261.0,548.5 L267.6,551.8" fill="none" stroke="#000080" stroke-width="0.95"/>
<path d="M267.6,551.8 L267.6,561.4" fill="none" stroke="#0000ff" stroke-width="1.3"/>
<path d="M260.3,561.4 H274.90000000000003 L267.6,568.9 Z" fill="none" stroke="#0000ff" stroke-width="1.1"/>
<text x="276" y="536.2" font-size="8.2" fill="#000000" stroke="#000000" stroke-width="0.28" textLength="12.6" lengthAdjust="spacingAndGlyphs">R25</text>
<text x="276" y="550.5" font-size="8.2" fill="#000000" stroke="#000000" stroke-width="0.28" textLength="18.5" lengthAdjust="spacingAndGlyphs">1Meg</text>
<circle cx="334.5" cy="393.6" r="17.8" fill="none" stroke="#000080" stroke-width="0.95"/>
<path d="M335.5,375.6 V387.20000000000005" stroke="#000080" stroke-width="1.2"/>
<rect x="327.2" y="387.20000000000005" width="16.6" height="2.6" fill="none" stroke="#000080" stroke-width="0.95"/>
<path d="M316.5,394.40000000000003 H350.0" stroke="#000080" stroke-width="1.3" stroke-dasharray="3.6 1.8"/>
<path d="M322.6,419.6 V401.0 L325.5,399.0 H344.5 L348.0,401.6  M323.6,400.8 H348.0" fill="none" stroke="#000080" stroke-width="0.95"/>
<text x="326.7" y="421.4" font-size="8.2" fill="#000000" stroke="#000000" stroke-width="0.28" textLength="21.3" lengthAdjust="spacingAndGlyphs">12AU7</text>
<path d="M322.6,419.6 L322.6,474" fill="none" stroke="#0000ff" stroke-width="1.3"/>
<rect x="320.0" y="446.9" width="5.2" height="5.2" fill="#0000ff"/>
<text x="309.5" y="452.2" font-size="8.2" fill="#000000" stroke="#000000" stroke-width="0.28" textLength="12.5" lengthAdjust="spacingAndGlyphs">MP</text>
<path d="M322.6,449.5 L339.8,449.5" fill="none" stroke="#0000ff" stroke-width="1.3"/>
<path d="M339.8,443.0 V456.0 M343.4,443.0 V456.0" stroke="#000080" stroke-width="1.3"/>
<path d="M343.4,449.5 L372.5,449.5" fill="none" stroke="#0000ff" stroke-width="1.3"/>
<rect x="357.9" y="446.9" width="5.2" height="5.2" fill="#0000ff"/>
<text x="336" y="441" font-size="8.2" fill="#000000" stroke="#000000" stroke-width="0.28" textLength="9.7" lengthAdjust="spacingAndGlyphs">C7</text>
<text x="336" y="462" font-size="8.2" fill="#000000" stroke="#000000" stroke-width="0.28" textLength="8.5" lengthAdjust="spacingAndGlyphs">1μ</text>
<path d="M372.5,444.6 H407.8 L413.1,449.6 L407.8,454.6 H372.5 Z" fill="none" stroke="#0000ff" stroke-width="1.1"/>
<text x="374.3" y="452.3" font-size="8.2" fill="#000000" stroke="#000000" stroke-width="0.28" textLength="32.5" lengthAdjust="spacingAndGlyphs">OutSend</text>
<path d="M267.6,493.6 L304.8,493.6" fill="none" stroke="#0000ff" stroke-width="1.3"/>
<circle cx="322.6" cy="491.9" r="17.8" fill="none" stroke="#000080" stroke-width="0.95"/>
<path d="M323.6,473.9 V485.5" stroke="#000080" stroke-width="1.2"/>
<rect x="315.3" y="485.5" width="16.6" height="2.6" fill="none" stroke="#000080" stroke-width="0.95"/>
<path d="M304.6,492.7 H338.1" stroke="#000080" stroke-width="1.3" stroke-dasharray="3.6 1.8"/>
<path d="M311.2,517.9 V499.29999999999995 L313.6,497.29999999999995 H332.6 L336.1,499.9  M312.2,499.09999999999997 H336.1" fill="none" stroke="#000080" stroke-width="0.95"/>
<text x="326.7" y="471" font-size="8.2" fill="#000000" stroke="#000000" stroke-width="0.28" textLength="9.5" lengthAdjust="spacingAndGlyphs">U5</text>
<text x="313.6" y="519.8" font-size="8.2" fill="#000000" stroke="#000000" stroke-width="0.28" textLength="22.6" lengthAdjust="spacingAndGlyphs">12AU7</text>
<text x="308.5" y="531.7" font-size="9" fill="#000000" stroke="#000000" stroke-width="0.28" textLength="27.4" lengthAdjust="spacingAndGlyphs" transform="rotate(-90 308.5 531.7)">CVOut</text>
<path d="M311.2,517.9 L311.2,529.3" fill="none" stroke="#0000ff" stroke-width="1.3"/>
<path d="M311.2,529.3 L317.5,532.8 L304.6,538.7 L317.5,544.6 L304.6,550.8 L311.2,554.1" fill="none" stroke="#000080" stroke-width="0.95"/>
<path d="M311.2,554.1 L311.2,561.4" fill="none" stroke="#0000ff" stroke-width="1.3"/>
<path d="M303.9,561.4 H318.5 L311.2,568.9 Z" fill="none" stroke="#0000ff" stroke-width="1.1"/>
<text x="318.3" y="536.2" font-size="8.2" fill="#000000" stroke="#000000" stroke-width="0.28" textLength="13.1" lengthAdjust="spacingAndGlyphs">R23</text>
<text x="318.3" y="550.5" font-size="8.2" fill="#000000" stroke="#000000" stroke-width="0.28" textLength="11.9" lengthAdjust="spacingAndGlyphs">470</text>
<path d="M360.5,449.5 L360.5,527" fill="none" stroke="#0000ff" stroke-width="1.3"/>
<rect x="357.9" y="491.0" width="5.2" height="5.2" fill="#0000ff"/>
<path d="M360.5,527.0 L366.8,530.5 L353.9,536.4 L366.8,542.3 L353.9,548.5 L360.5,551.8" fill="none" stroke="#000080" stroke-width="0.95"/>
<path d="M360.5,551.8 L360.5,678.1" fill="none" stroke="#0000ff" stroke-width="1.3"/>
<rect x="357.9" y="570.6999999999999" width="5.2" height="5.2" fill="#0000ff"/>
<path d="M353.2,678.1 H367.8 L360.5,685.6 Z" fill="none" stroke="#0000ff" stroke-width="1.1"/>
<text x="367" y="536.2" font-size="8.2" fill="#000000" stroke="#000000" stroke-width="0.28" textLength="13" lengthAdjust="spacingAndGlyphs">R12</text>
<text x="367" y="550.5" font-size="8.2" fill="#000000" stroke="#000000" stroke-width="0.28" textLength="15.6" lengthAdjust="spacingAndGlyphs">100k</text>
<path d="M360.5,493.6 L374.5,493.6" fill="none" stroke="#0000ff" stroke-width="1.3"/>
<path d="M374.5,493.6 L378.0,487.3 L383.9,500.6 L389.8,487.3 L396.0,500.6 L399.3,493.6" fill="none" stroke="#000080" stroke-width="0.95"/>
<path d="M399.3,493.6 L455.5,493.6" fill="none" stroke="#0000ff" stroke-width="1.3"/>
<rect x="406.9" y="491.0" width="5.2" height="5.2" fill="#0000ff"/>
<rect x="437.9" y="491.0" width="5.2" height="5.2" fill="#0000ff"/>
<text x="380.5" y="484" font-size="8.2" fill="#000000" stroke="#000000" stroke-width="0.28" textLength="13.8" lengthAdjust="spacingAndGlyphs">R19</text>
<text x="379.3" y="507" font-size="8.2" fill="#000000" stroke="#000000" stroke-width="0.28" textLength="15.0" lengthAdjust="spacingAndGlyphs">30m</text>
<path d="M455.5,493.6 L459.0,487.3 L464.9,500.6 L470.8,487.3 L477.0,500.6 L480.3,493.6" fill="none" stroke="#000080" stroke-width="0.95"/>
<path d="M480.3,493.6 L496.7,493.6" fill="none" stroke="#0000ff" stroke-width="1.3"/>
<text x="461.4" y="484" font-size="8.2" fill="#000000" stroke="#000000" stroke-width="0.28" textLength="13.8" lengthAdjust="spacingAndGlyphs">R20</text>
<text x="461.4" y="507" font-size="8.2" fill="#000000" stroke="#000000" stroke-width="0.28" textLength="13.8" lengthAdjust="spacingAndGlyphs">30m</text>
<path d="M409.5,493.6 L409.5,527" fill="none" stroke="#0000ff" stroke-width="1.3"/>
<path d="M409.5,527.0 L415.8,530.5 L402.9,536.4 L415.8,542.3 L402.9,548.5 L409.5,551.8" fill="none" stroke="#000080" stroke-width="0.95"/>
<path d="M409.5,551.8 L409.5,573.3" fill="none" stroke="#0000ff" stroke-width="1.3"/>
<rect x="406.9" y="570.6999999999999" width="5.2" height="5.2" fill="#0000ff"/>
<text x="417.4" y="536.2" font-size="8.2" fill="#000000" stroke="#000000" stroke-width="0.28" textLength="13.6" lengthAdjust="spacingAndGlyphs">R16</text>
<text x="417.4" y="550.5" font-size="8.2" fill="#000000" stroke="#000000" stroke-width="0.28" textLength="11.2" lengthAdjust="spacingAndGlyphs">47k</text>
<path d="M440.5,493.6 L440.5,534.8" fill="none" stroke="#0000ff" stroke-width="1.3"/>
<path d="M434.0,534.8 H447.0 M434.0,538.8 H447.0" stroke="#000080" stroke-width="1.3"/>
<path d="M440.5,538.8 L440.5,573.3 L360.5,573.3" fill="none" stroke="#0000ff" stroke-width="1.3"/>
<text x="443" y="530" font-size="8.2" fill="#000000" stroke="#000000" stroke-width="0.28" textLength="10" lengthAdjust="spacingAndGlyphs">C5</text>
<text x="443" y="549" font-size="8.2" fill="#000000" stroke="#000000" stroke-width="0.28" textLength="20.8" lengthAdjust="spacingAndGlyphs">1000p</text>
<text x="415.7" y="588.6" font-size="8.4" font-weight="bold" fill="#2a1ec8" textLength="19.5" lengthAdjust="spacingAndGlyphs">Loop</text>
<path d="M496.7,493.6 L501.2,488.6 H524.5 V498.6 H501.2 Z" fill="none" stroke="#0000ff" stroke-width="1.1"/>
<text x="501.5" y="496.3" font-size="8.2" fill="#000000" stroke="#000000" stroke-width="0.28" textLength="19" lengthAdjust="spacingAndGlyphs">InRec</text>
<path d="M496.7,493.6 L496.7,515" fill="none" stroke="#0000ff" stroke-width="1.3"/>
<path d="M496.7,515.0 L503.0,518.5 L490.1,524.4 L503.0,530.3 L490.1,536.5 L496.7,539.8" fill="none" stroke="#000080" stroke-width="0.95"/>
<path d="M496.7,539.8 L496.7,577" fill="none" stroke="#0000ff" stroke-width="1.3"/>
<rect x="494.09999999999997" y="552.9" width="5.2" height="5.2" fill="#0000ff"/>
<path d="M496.7,577.0 L503.0,580.5 L490.1,586.4 L503.0,592.3 L490.1,598.5 L496.7,601.8" fill="none" stroke="#000080" stroke-width="0.95"/>
<path d="M496.7,601.8 L496.7,678.1" fill="none" stroke="#0000ff" stroke-width="1.3"/>
<path d="M489.4,678.1 H504.0 L496.7,685.6 Z" fill="none" stroke="#0000ff" stroke-width="1.1"/>
<text x="503.8" y="523" font-size="8.2" fill="#000000" stroke="#000000" stroke-width="0.28" textLength="13.6" lengthAdjust="spacingAndGlyphs">R17</text>
<text x="503.8" y="537.4" font-size="8.2" fill="#000000" stroke="#000000" stroke-width="0.28" textLength="11.2" lengthAdjust="spacingAndGlyphs">85k</text>
<text x="503.8" y="585.5" font-size="8.2" fill="#000000" stroke="#000000" stroke-width="0.28" textLength="13.6" lengthAdjust="spacingAndGlyphs">R18</text>
<text x="503.8" y="599.3" font-size="8.2" fill="#000000" stroke="#000000" stroke-width="0.28" textLength="11.2" lengthAdjust="spacingAndGlyphs">15k</text>
<text x="480.3" y="586.4" font-size="8.8" font-weight="bold" fill="#2a1ec8" textLength="51.4" lengthAdjust="spacingAndGlyphs" transform="rotate(-90 480.3 586.4)">Receive Pot</text>
<path d="M496.7,555.5 L525.2,555.5" fill="none" stroke="#0000ff" stroke-width="1.3"/>
<path d="M525.2,549.0 V562.0 M528.8,549.0 V562.0" stroke="#000080" stroke-width="1.3"/>
<path d="M528.8,555.5 L620.3,555.5" fill="none" stroke="#0000ff" stroke-width="1.3"/>
<text x="522.9" y="546.5" font-size="8.2" fill="#000000" stroke="#000000" stroke-width="0.28" textLength="8.8" lengthAdjust="spacingAndGlyphs">C2</text>
<text x="517.4" y="569.6" font-size="8.2" fill="#000000" stroke="#000000" stroke-width="0.28" textLength="17.4" lengthAdjust="spacingAndGlyphs">470n</text>
<rect x="580.0" y="552.9" width="5.2" height="5.2" fill="#0000ff"/>
<path d="M582.6,555.5 L582.6,596.2" fill="none" stroke="#0000ff" stroke-width="1.3"/>
<path d="M582.6,596.2 L588.9,599.7 L576.0,605.6 L588.9,611.5 L576.0,617.7 L582.6,621.0" fill="none" stroke="#000080" stroke-width="0.95"/>
<path d="M582.6,621 L582.6,629.5 L626.7,629.5" fill="none" stroke="#0000ff" stroke-width="1.3"/>
<text x="590.5" y="604.3" font-size="8.2" fill="#000000" stroke="#000000" stroke-width="0.28" textLength="10.0" lengthAdjust="spacingAndGlyphs">R5</text>
<text x="590.5" y="618.6" font-size="8.2" fill="#000000" stroke="#000000" stroke-width="0.28" textLength="19.5" lengthAdjust="spacingAndGlyphs">1Meg</text>
<circle cx="637.1" cy="555.2" r="17.8" fill="none" stroke="#000080" stroke-width="0.95"/>
<path d="M638.1,537.2 V548.8000000000001" stroke="#000080" stroke-width="1.2"/>
<rect x="629.8000000000001" y="548.8000000000001" width="16.6" height="2.6" fill="none" stroke="#000080" stroke-width="0.95"/>
<path d="M619.1,556.0 H652.6" stroke="#000080" stroke-width="1.3" stroke-dasharray="3.6 1.8"/>
<path d="M626.7,581.2 V562.6 L628.1,560.6 H647.1 L650.6,563.2  M627.7,562.4000000000001 H650.6" fill="none" stroke="#000080" stroke-width="0.95"/>
<text x="641.2" y="533.6" font-size="8.2" fill="#000000" stroke="#000000" stroke-width="0.28" textLength="9.5" lengthAdjust="spacingAndGlyphs">U1</text>
<text x="628.6" y="582.4" font-size="8.2" fill="#000000" stroke="#000000" stroke-width="0.28" textLength="23.3" lengthAdjust="spacingAndGlyphs">6N23P</text>
<text x="624" y="592.6" font-size="9" fill="#000000" stroke="#000000" stroke-width="0.28" textLength="28.6" lengthAdjust="spacingAndGlyphs" transform="rotate(-90 624 592.6)">CVRec</text>
<path d="M626.7,581.2 L626.7,596.2" fill="none" stroke="#0000ff" stroke-width="1.3"/>
<path d="M626.7,596.2 L633.0,599.7 L620.1,605.6 L633.0,611.5 L620.1,617.7 L626.7,621.0" fill="none" stroke="#000080" stroke-width="0.95"/>
<path d="M626.7,621 L626.7,646.2" fill="none" stroke="#0000ff" stroke-width="1.3"/>
<rect x="624.1" y="626.9" width="5.2" height="5.2" fill="#0000ff"/>
<path d="M626.7,646.2 L633.0,649.7 L620.1,655.6 L633.0,661.5 L620.1,667.7 L626.7,671.0" fill="none" stroke="#000080" stroke-width="0.95"/>
<path d="M626.7,671 L626.7,678.3" fill="none" stroke="#0000ff" stroke-width="1.3"/>
<path d="M619.4000000000001,678.3 H634.0 L626.7,685.8 Z" fill="none" stroke="#0000ff" stroke-width="1.1"/>
<text x="633.3" y="604.3" font-size="8.2" fill="#000000" stroke="#000000" stroke-width="0.28" textLength="10.0" lengthAdjust="spacingAndGlyphs">R3</text>
<text x="633.3" y="618.6" font-size="8.2" fill="#000000" stroke="#000000" stroke-width="0.28" textLength="11.9" lengthAdjust="spacingAndGlyphs">330</text>
<text x="633.3" y="653.1" font-size="8.2" fill="#000000" stroke="#000000" stroke-width="0.28" textLength="10.0" lengthAdjust="spacingAndGlyphs">R8</text>
<text x="633.3" y="667.4" font-size="8.2" fill="#000000" stroke="#000000" stroke-width="0.28" textLength="11.9" lengthAdjust="spacingAndGlyphs">510</text>
<path d="M638.1,537.4 L638.1,492" fill="none" stroke="#0000ff" stroke-width="1.3"/>
<circle cx="650.7" cy="474" r="17.8" fill="none" stroke="#000080" stroke-width="0.95"/>
<path d="M651.7,456 V467.6" stroke="#000080" stroke-width="1.2"/>
<rect x="643.4000000000001" y="467.6" width="16.6" height="2.6" fill="none" stroke="#000080" stroke-width="0.95"/>
<path d="M632.7,474.8 H666.2" stroke="#000080" stroke-width="1.3" stroke-dasharray="3.6 1.8"/>
<path d="M638.1,500 V481.4 L641.7,479.4 H660.7 L664.2,482  M639.1,481.2 H664.2" fill="none" stroke="#000080" stroke-width="0.95"/>
<text x="641.2" y="502.8" font-size="8.2" fill="#000000" stroke="#000000" stroke-width="0.28" textLength="22.6" lengthAdjust="spacingAndGlyphs">6N23P</text>
<path d="M570.5,474 L591.2,474" fill="none" stroke="#0000ff" stroke-width="1.3"/>
<path d="M591.2,474.0 L594.7,467.7 L600.6,481.0 L606.5,467.7 L612.7,481.0 L616.0,474.0" fill="none" stroke="#000080" stroke-width="0.95"/>
<path d="M616,474 L632.8,474" fill="none" stroke="#0000ff" stroke-width="1.3"/>
<text x="599.5" y="466.3" font-size="8.2" fill="#000000" stroke="#000000" stroke-width="0.28" textLength="9.5" lengthAdjust="spacingAndGlyphs">R2</text>
<text x="598.3" y="488.4" font-size="8.2" fill="#000000" stroke="#000000" stroke-width="0.28" textLength="11.9" lengthAdjust="spacingAndGlyphs">100</text>
<path d="M570.5,394.3 L570.5,403.3" fill="none" stroke="#0000ff" stroke-width="1.3"/>
<path d="M570.5,403.3 L576.8,406.8 L563.9,412.7 L576.8,418.6 L563.9,424.8 L570.5,428.1" fill="none" stroke="#000080" stroke-width="0.95"/>
<path d="M570.5,428.1 L570.5,496.2" fill="none" stroke="#0000ff" stroke-width="1.3"/>
<rect x="567.9" y="471.4" width="5.2" height="5.2" fill="#0000ff"/>
<path d="M570.5,496.2 L576.8,499.7 L563.9,505.6 L576.8,511.5 L563.9,517.7 L570.5,521.0" fill="none" stroke="#000080" stroke-width="0.95"/>
<path d="M570.5,521 L570.5,530.2 L545.2,530.2 L545.2,507.9" fill="none" stroke="#0000ff" stroke-width="1.3"/>
<path d="M538.7,503.8 H551.7 M538.7,507.9 H551.7" stroke="#000080" stroke-width="1.3"/>
<path d="M545.2,503.8 L545.2,474 L570.5,474" fill="none" stroke="#0000ff" stroke-width="1.3"/>
<rect x="555.9" y="527.6" width="5.2" height="5.2" fill="#0000ff"/>
<path d="M558.5,530.2 L558.5,542.5" fill="none" stroke="#0000ff" stroke-width="1.3"/>
<path d="M551.2,542.5 H565.8 L558.5,550.0 Z" fill="none" stroke="#0000ff" stroke-width="1.1"/>
<text x="578.6" y="412.3" font-size="8.2" fill="#000000" stroke="#000000" stroke-width="0.28" textLength="9.5" lengthAdjust="spacingAndGlyphs">R6</text>
<text x="578.6" y="426.5" font-size="8.2" fill="#000000" stroke="#000000" stroke-width="0.28" textLength="15.4" lengthAdjust="spacingAndGlyphs">330k</text>
<text x="578.6" y="505.1" font-size="8.2" fill="#000000" stroke="#000000" stroke-width="0.28" textLength="9.5" lengthAdjust="spacingAndGlyphs">R7</text>
<text x="578.6" y="519.3" font-size="8.2" fill="#000000" stroke="#000000" stroke-width="0.28" textLength="11.4" lengthAdjust="spacingAndGlyphs">82k</text>
<text x="548.3" y="499.4" font-size="8.2" fill="#000000" stroke="#000000" stroke-width="0.28" textLength="9.6" lengthAdjust="spacingAndGlyphs">C3</text>
<text x="548.3" y="518.4" font-size="8.2" fill="#000000" stroke="#000000" stroke-width="0.28" textLength="15.5" lengthAdjust="spacingAndGlyphs">3.3μ</text>
<path d="M520.2,409.6 L520.2,394.3 L650.7,394.3 L650.7,403.3" fill="none" stroke="#0000ff" stroke-width="1.3"/>
<rect x="567.9" y="391.7" width="5.2" height="5.2" fill="#0000ff"/>
<circle cx="520.2" cy="421.2" r="11.6" fill="none" stroke="#000080" stroke-width="1.2"/>
<path d="M516.7,414.5 H523.7 M520.2,411.0 V418.0 M516.9000000000001,430.4 H523.5" stroke="#000080" stroke-width="1.2"/>
<path d="M520.2,432.8 L520.2,443.3" fill="none" stroke="#0000ff" stroke-width="1.3"/>
<path d="M512.9000000000001,443.3 H527.5 L520.2,450.8 Z" fill="none" stroke="#0000ff" stroke-width="1.1"/>
<text x="529.3" y="409.2" font-size="8.2" fill="#000000" stroke="#000000" stroke-width="0.28" textLength="9.5" lengthAdjust="spacingAndGlyphs">V1</text>
<text x="529.3" y="440" font-size="8.2" fill="#000000" stroke="#000000" stroke-width="0.28" textLength="12.6" lengthAdjust="spacingAndGlyphs">300</text>
<text x="611.4" y="392.4" font-size="8.2" fill="#000000" stroke="#000000" stroke-width="0.28" textLength="14.3" lengthAdjust="spacingAndGlyphs">B+2</text>
<path d="M650.7,403.3 L657.0,406.8 L644.1,412.7 L657.0,418.6 L644.1,424.8 L650.7,428.1" fill="none" stroke="#000080" stroke-width="0.95"/>
<path d="M650.7,428.1 L650.7,456.2" fill="none" stroke="#0000ff" stroke-width="1.3"/>
<rect x="648.1" y="440.7" width="5.2" height="5.2" fill="#0000ff"/>
<text x="658.6" y="412.3" font-size="8.2" fill="#000000" stroke="#000000" stroke-width="0.28" textLength="8.8" lengthAdjust="spacingAndGlyphs">R1</text>
<text x="658.6" y="426.5" font-size="8.2" fill="#000000" stroke="#000000" stroke-width="0.28" textLength="11.2" lengthAdjust="spacingAndGlyphs">25k</text>
<text x="653.8" y="452" font-size="8.2" fill="#000000" stroke="#000000" stroke-width="0.28" textLength="9.5" lengthAdjust="spacingAndGlyphs">U2</text>
<path d="M650.7,443.3 L680.5,443.3" fill="none" stroke="#0000ff" stroke-width="1.3"/>
<path d="M680.5,436.8 V449.8 M684,436.8 V449.8" stroke="#000080" stroke-width="1.3"/>
<path d="M684,443.3 L700.6,443.3" fill="none" stroke="#0000ff" stroke-width="1.3"/>
<text x="676.2" y="435.3" font-size="8.2" fill="#000000" stroke="#000000" stroke-width="0.28" textLength="9.5" lengthAdjust="spacingAndGlyphs">C1</text>
<text x="672.1" y="457.4" font-size="8.2" fill="#000000" stroke="#000000" stroke-width="0.28" textLength="16.7" lengthAdjust="spacingAndGlyphs">330n</text>
<path d="M700.6,438.5 H730.7 L736.0,443.5 L730.7,448.5 H700.6 Z" fill="none" stroke="#0000ff" stroke-width="1.1"/>
<text x="702.4" y="446.2" font-size="8.2" fill="#000000" stroke="#000000" stroke-width="0.28" textLength="28" lengthAdjust="spacingAndGlyphs">OutRec</text>
<path d="M700.6,448.5 L700.6,520" fill="none" stroke="#0000ff" stroke-width="1.3"/>
<path d="M700.6,520.0 L706.9,523.5 L694.0,529.4 L706.9,535.3 L694.0,541.5 L700.6,544.8" fill="none" stroke="#000080" stroke-width="0.95"/>
<path d="M700.6,544.8 L700.6,678.3" fill="none" stroke="#0000ff" stroke-width="1.3"/>
<path d="M693.3000000000001,678.3 H707.9 L700.6,685.8 Z" fill="none" stroke="#0000ff" stroke-width="1.1"/>
<text x="708.3" y="530.5" font-size="8.2" fill="#000000" stroke="#000000" stroke-width="0.28" textLength="9.6" lengthAdjust="spacingAndGlyphs">R4</text>
<text x="708.3" y="544.8" font-size="8.2" fill="#000000" stroke="#000000" stroke-width="0.28" textLength="16.7" lengthAdjust="spacingAndGlyphs">220k</text>
<text x="149.5" y="510.7" font-size="8.2" fill="#0a0ae0" stroke="#0a0ae0" stroke-width="0.28" textLength="61.5" lengthAdjust="spacingAndGlyphs">Rout(80Hz)=2.0k</text>
<text x="149.5" y="521.5" font-size="8.2" fill="#0a0ae0" stroke="#0a0ae0" stroke-width="0.28" textLength="67.5" lengthAdjust="spacingAndGlyphs">Rout(1000Hz)=232</text>
<text x="149.5" y="532.8" font-size="8.2" fill="#0a0ae0" stroke="#0a0ae0" stroke-width="0.28" textLength="86.5" lengthAdjust="spacingAndGlyphs">RL----10k----50k----100k</text>
<text x="149.5" y="543.3" font-size="8.2" fill="#0a0ae0" stroke="#0a0ae0" stroke-width="0.28" textLength="78.5" lengthAdjust="spacingAndGlyphs">K,dB&#160;-0.7--&#160;-0.6---&#160;-0.6</text>
<text x="149.5" y="553.8" font-size="8.2" fill="#0a0ae0" stroke="#0a0ae0" stroke-width="0.28" textLength="75" lengthAdjust="spacingAndGlyphs">I/I&#160;&#160;&#160;&#160;1.00--1.03----1.01</text>
<text x="149.5" y="564.6" font-size="8.2" fill="#0a0ae0" stroke="#0a0ae0" stroke-width="0.28" textLength="78.4" lengthAdjust="spacingAndGlyphs">THD%0.07-0.03---0.03</text>
<text x="681.4" y="358.7" font-size="8.2" fill="#0a0ae0" stroke="#0a0ae0" stroke-width="0.28" textLength="29.9" lengthAdjust="spacingAndGlyphs">W/o&#160;C2:</text>
<text x="681.4" y="369.8" font-size="8.2" fill="#0a0ae0" stroke="#0a0ae0" stroke-width="0.28" textLength="65.4" lengthAdjust="spacingAndGlyphs">Rout(80Hz)=24.3k</text>
<text x="681.4" y="380.5" font-size="8.2" fill="#0a0ae0" stroke="#0a0ae0" stroke-width="0.28" textLength="73.6" lengthAdjust="spacingAndGlyphs">Rout(1000Hz)=23.6k</text>
<text x="681.4" y="391.6" font-size="8.2" fill="#0a0ae0" stroke="#0a0ae0" stroke-width="0.28" textLength="38.5" lengthAdjust="spacingAndGlyphs">RL----220k</text>
<text x="681.4" y="402.6" font-size="8.2" fill="#0a0ae0" stroke="#0a0ae0" stroke-width="0.28" textLength="36.5" lengthAdjust="spacingAndGlyphs">K,dB&#160;&#160;11.6</text>
<text x="681.4" y="413.7" font-size="8.2" fill="#0a0ae0" stroke="#0a0ae0" stroke-width="0.28" textLength="74.5" lengthAdjust="spacingAndGlyphs">THD%0.24@10V&#160;out</text></g>
<rect x="664" y="326" width="281" height="7" fill="url(#shadow)"/>
<rect x="662" y="29" width="283" height="297" fill="#8c8c8c"/>
<rect x="662" y="29" width="283" height="1" fill="#b4b4b4"/>
<rect x="662" y="55" width="1" height="271" fill="#6a6a6a"/>
<rect x="662" y="325" width="283" height="1" fill="#606060"/>
<rect x="663" y="30" width="281" height="25" fill="#ffffff"/>
<rect x="663" y="55" width="281" height="270" fill="#f0f0f0"/>
<rect x="663" y="324" width="281" height="1" fill="#fcfcfc"/>
<path d="M672,37.1 L673.6,37.1 Q671.7,40.5 671.9,43.5 Q672.3,45.6 674,46.8 H666 Q668.3,45.3 669.8,42.5 Q671,39.5 672,37.1 Z" fill="#8a0000"/>
<path d="M674.3,37 H682.2 L681.2,38.6 H680 Q678.4,41 677.2,43.8 Q676.4,45.8 675.2,46.8 Q675.4,43 676.2,40.5 Q676.6,39.4 677,38.6 H673.9 Z" fill="#8a0000"/>
<text x="687.3" y="46.3" font-size="12.4" fill="#a0a0a0" text-anchor="start" textLength="84.3" lengthAdjust="spacingAndGlyphs">Full-tube-v2.asc</text>
<path d="M924 37 L934 47 M934 37 L924 47" stroke="#5a5a5a" stroke-width="1"/>
<line x1="663" y1="61.5" x2="670" y2="61.5" stroke="#d5d5d5"/>
<line x1="713" y1="61.5" x2="944" y2="61.5" stroke="#d5d5d5"/>
<text x="672.5" y="66" font-size="11.6" fill="#000" text-anchor="start" textLength="37" lengthAdjust="spacingAndGlyphs">Cursor 1</text>
<text x="794" y="77" font-size="11.6" fill="#000" text-anchor="middle" textLength="43.7" lengthAdjust="spacingAndGlyphs">V(outrec)</text>
<text x="691.5" y="98" font-size="11.6" fill="#000" text-anchor="end" textLength="22.5" lengthAdjust="spacingAndGlyphs">Freq:</text>
<rect x="695.5" y="84.5" width="91" height="19" fill="#fff" stroke="#7a7a7a" stroke-width="1"/><text x="699.2" y="98" font-size="11.6" fill="#000" text-anchor="start" textLength="63.9" lengthAdjust="spacingAndGlyphs">80.298816Hz</text>
<text x="823.5" y="98" font-size="11.6" fill="#000" text-anchor="end" textLength="23.2" lengthAdjust="spacingAndGlyphs">Mag:</text>
<rect x="830" y="84" width="91" height="20" fill="#fff"/><path d="M830.5 104 V84.5 H921" fill="none" stroke="#a0a0a0" stroke-width="1"/><path d="M831.5 103 V85.5 H920" fill="none" stroke="#696969" stroke-width="1"/><path d="M831 102.5 H919.5 V85" fill="none" stroke="#e3e3e3" stroke-width="1"/><text x="834.2" y="98" font-size="11.6" fill="#000" text-anchor="start" textLength="63.3" lengthAdjust="spacingAndGlyphs">20.028639dB</text>
<circle cx="932.5" cy="95" r="5.5" fill="#fff" stroke="#333" stroke-width="1"/><circle cx="932.5" cy="95" r="3" fill="#333"/>
<text x="823.5" y="119" font-size="11.6" fill="#000" text-anchor="end" textLength="32.2" lengthAdjust="spacingAndGlyphs">Phase:</text>
<rect x="830" y="105" width="91" height="19" fill="#fff"/><path d="M830.5 124 V105.5 H921" fill="none" stroke="#a0a0a0" stroke-width="1"/><path d="M831.5 123 V106.5 H920" fill="none" stroke="#696969" stroke-width="1"/><path d="M831 122.5 H919.5 V106" fill="none" stroke="#e3e3e3" stroke-width="1"/><text x="834.2" y="119" font-size="11.6" fill="#000" text-anchor="start" textLength="57.9" lengthAdjust="spacingAndGlyphs">-173.46417°</text>
<circle cx="932.5" cy="115.5" r="5.5" fill="#fff" stroke="#333" stroke-width="1"/>
<text x="823.5" y="141" font-size="11.6" fill="#000" text-anchor="end" textLength="60.9" lengthAdjust="spacingAndGlyphs">Group Delay:</text>
<rect x="830.5" y="127.5" width="90" height="19" fill="#fff" stroke="#7a7a7a" stroke-width="1"/><text x="834.2" y="141" font-size="11.6" fill="#000" text-anchor="start" textLength="61.8" lengthAdjust="spacingAndGlyphs">226.94365μs</text>
<circle cx="932.5" cy="137" r="5.5" fill="#fff" stroke="#cccccc" stroke-width="1"/>
<line x1="663" y1="147.5" x2="944" y2="147.5" stroke="#d5d5d5"/>
<line x1="663" y1="155.5" x2="670" y2="155.5" stroke="#d5d5d5"/>
<line x1="713" y1="155.5" x2="944" y2="155.5" stroke="#d5d5d5"/>
<text x="672.5" y="160" font-size="11.6" fill="#000" text-anchor="start" textLength="37" lengthAdjust="spacingAndGlyphs">Cursor 2</text>
<text x="794" y="172" font-size="11.6" fill="#000" text-anchor="middle" textLength="43.7" lengthAdjust="spacingAndGlyphs">V(outrec)</text>
<text x="691.5" y="193" font-size="11.6" fill="#000" text-anchor="end" textLength="22.5" lengthAdjust="spacingAndGlyphs">Freq:</text>
<rect x="696.5" y="179.5" width="91" height="19" fill="#fff" stroke="#7a7a7a" stroke-width="1"/><text x="700.2" y="193" font-size="11.6" fill="#000" text-anchor="start" textLength="70.8" lengthAdjust="spacingAndGlyphs">20.016357KHz</text>
<text x="823.5" y="193" font-size="11.6" fill="#000" text-anchor="end" textLength="23.2" lengthAdjust="spacingAndGlyphs">Mag:</text>
<rect x="831" y="179" width="91" height="20" fill="#fff"/><path d="M831.5 199 V179.5 H922" fill="none" stroke="#a0a0a0" stroke-width="1"/><path d="M832.5 198 V180.5 H921" fill="none" stroke="#696969" stroke-width="1"/><path d="M832 197.5 H920.5 V180" fill="none" stroke="#e3e3e3" stroke-width="1"/><text x="835.2" y="193" font-size="11.6" fill="#000" text-anchor="start" textLength="62.7" lengthAdjust="spacingAndGlyphs">20.095104dB</text>
<circle cx="932.5" cy="187" r="5.5" fill="#fff" stroke="#333" stroke-width="1"/><circle cx="932.5" cy="187" r="3" fill="#333"/>
<text x="823.5" y="214" font-size="11.6" fill="#000" text-anchor="end" textLength="32.2" lengthAdjust="spacingAndGlyphs">Phase:</text>
<rect x="831" y="200" width="91" height="19" fill="#fff"/><path d="M831.5 219 V200.5 H922" fill="none" stroke="#a0a0a0" stroke-width="1"/><path d="M832.5 218 V201.5 H921" fill="none" stroke="#696969" stroke-width="1"/><path d="M832 217.5 H920.5 V201" fill="none" stroke="#e3e3e3" stroke-width="1"/><text x="835.2" y="214" font-size="11.6" fill="#000" text-anchor="start" textLength="58.8" lengthAdjust="spacingAndGlyphs">-185.64486°</text>
<circle cx="932.5" cy="208.5" r="5.5" fill="#fff" stroke="#333" stroke-width="1"/>
<text x="823.5" y="235" font-size="11.6" fill="#000" text-anchor="end" textLength="60.9" lengthAdjust="spacingAndGlyphs">Group Delay:</text>
<rect x="831.5" y="221.5" width="90" height="19" fill="#fff" stroke="#7a7a7a" stroke-width="1"/><text x="835.2" y="235" font-size="11.6" fill="#000" text-anchor="start" textLength="57.3" lengthAdjust="spacingAndGlyphs">797.8559ns</text>
<circle cx="932.5" cy="229" r="5.5" fill="#fff" stroke="#cccccc" stroke-width="1"/>
<line x1="663" y1="241.5" x2="944" y2="241.5" stroke="#d5d5d5"/>
<path d="M663 251.5 H800 M921 251.5 H925.5 V324" fill="none" stroke="#d5d5d5"/>
<text x="802.5" y="256.5" font-size="11.6" fill="#000" text-anchor="start" textLength="117" lengthAdjust="spacingAndGlyphs">Ratio (Cursor2 / Cursor1)</text>
<text x="691.5" y="275" font-size="11.6" fill="#000" text-anchor="end" textLength="22.5" lengthAdjust="spacingAndGlyphs">Freq:</text>
<rect x="696.5" y="261.5" width="91" height="19" fill="#fff" stroke="#7a7a7a" stroke-width="1"/><text x="700.2" y="275" font-size="11.6" fill="#000" text-anchor="start" textLength="70.8" lengthAdjust="spacingAndGlyphs">19.936058KHz</text>
<text x="823.5" y="275" font-size="11.6" fill="#000" text-anchor="end" textLength="23.2" lengthAdjust="spacingAndGlyphs">Mag:</text>
<rect x="831.5" y="261.5" width="90" height="19" fill="#fff" stroke="#7a7a7a" stroke-width="1"/><text x="835.2" y="275" font-size="11.6" fill="#000" text-anchor="start" textLength="70.6" lengthAdjust="spacingAndGlyphs">66.465614mdB</text>
<text x="823.5" y="297" font-size="11.6" fill="#000" text-anchor="end" textLength="32.2" lengthAdjust="spacingAndGlyphs">Phase:</text>
<rect x="831.5" y="283.5" width="90" height="19" fill="#fff" stroke="#7a7a7a" stroke-width="1"/><text x="835.2" y="297" font-size="11.6" fill="#000" text-anchor="start" textLength="57.9" lengthAdjust="spacingAndGlyphs">-12.180694°</text>
<text x="823.5" y="318" font-size="11.6" fill="#000" text-anchor="end" textLength="60.9" lengthAdjust="spacingAndGlyphs">Group Delay:</text>
<rect x="831.5" y="304.5" width="90" height="19" fill="#fff" stroke="#7a7a7a" stroke-width="1"/><text x="835.2" y="318" font-size="11.6" fill="#000" text-anchor="start" textLength="65.4" lengthAdjust="spacingAndGlyphs">-226.14579μs</text>
</svg></body></html>
